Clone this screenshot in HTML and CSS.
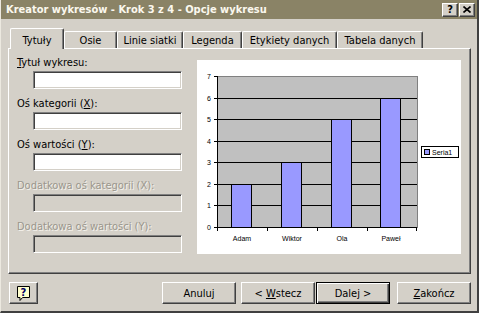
FILE: index.html
```html
<!DOCTYPE html>
<html lang="pl">
  <head>
    <meta charset="UTF-8" />
    <title>Kreator wykresów - Krok 3 z 4 - Opcje wykresu</title>
    <link rel="stylesheet" href="styles.css">
  </head>
  <body>
    <div class="window">
      <div class="titlebar">
        <span class="title">Kreator wykresów - Krok 3 z 4 - Opcje wykresu</span>
        <button class="cap-btn cap-help">?</button>
        <button class="cap-btn cap-close">
          <svg width="8" height="7" viewBox="0 0 8 7">
            <path d="M0.5 0.5 L7.5 6.5 M7.5 0.5 L0.5 6.5" stroke="#000" stroke-width="1.6" />
          </svg>
        </button>
      </div>

      <div class="content">
        <div class="tabs">
          <div class="tab active" style="width: 54px">Tytuły</div>
          <div class="tab" style="width: 53px">Osie</div>
          <div class="tab" style="width: 66px">Linie siatki</div>
          <div class="tab" style="width: 59px">Legenda</div>
          <div class="tab" style="width: 95px">Etykiety danych</div>
          <div class="tab" style="width: 86px">Tabela danych</div>
        </div>

        <div class="panel">
          <div class="fields">
            <div class="field">
              <label><u>T</u>ytuł wykresu:</label>
              <input type="text" class="edit" />
            </div>
            <div class="field">
              <label>Oś kategorii (<u>X</u>):</label>
              <input type="text" class="edit" />
            </div>
            <div class="field">
              <label>Oś wartości (<u>Y</u>):</label>
              <input type="text" class="edit" />
            </div>
            <div class="field disabled">
              <label>Dodatkowa oś kategorii (X):</label>
              <input type="text" class="edit" disabled />
            </div>
            <div class="field disabled">
              <label>Dodatkowa oś wartości (Y):</label>
              <input type="text" class="edit" disabled />
            </div>
          </div>

          <div class="chart">
            <svg width="264" height="194" viewBox="0 0 264 194">
              <!-- plot area -->
              <rect x="20.5" y="16.5" width="200" height="151" fill="#c0c0c0" stroke="#808080" />
              <g stroke="#000" stroke-width="1">
                <line x1="20" y1="145.5" x2="220" y2="145.5" />
                <line x1="20" y1="124.5" x2="220" y2="124.5" />
                <line x1="20" y1="102.5" x2="220" y2="102.5" />
                <line x1="20" y1="81.5" x2="220" y2="81.5" />
                <line x1="20" y1="59.5" x2="220" y2="59.5" />
                <line x1="20" y1="38.5" x2="220" y2="38.5" />
              </g>

              <!-- bars -->
              <g fill="#9999ff" stroke="#000" stroke-width="1">
                <rect x="34.5" y="124.5" width="20" height="43" />
                <rect x="84.5" y="102.5" width="20" height="65" />
                <rect x="134.5" y="59.5" width="20" height="108" />
                <rect x="183.5" y="38.5" width="20" height="129" />
              </g>

              <!-- axes -->
              <g stroke="#000" stroke-width="1">
                <line x1="20.5" y1="16" x2="20.5" y2="168" />
                <line x1="17" y1="167.5" x2="220" y2="167.5" />
                <line x1="17" y1="16.5" x2="20" y2="16.5" />
                <line x1="17" y1="38.5" x2="20" y2="38.5" />
                <line x1="17" y1="59.5" x2="20" y2="59.5" />
                <line x1="17" y1="81.5" x2="20" y2="81.5" />
                <line x1="17" y1="102.5" x2="20" y2="102.5" />
                <line x1="17" y1="124.5" x2="20" y2="124.5" />
                <line x1="17" y1="145.5" x2="20" y2="145.5" />
                <line x1="20.5" y1="167" x2="20.5" y2="171" />
                <line x1="70.5" y1="167" x2="70.5" y2="171" />
                <line x1="120.5" y1="167" x2="120.5" y2="171" />
                <line x1="170.5" y1="167" x2="170.5" y2="171" />
                <line x1="219.5" y1="167" x2="219.5" y2="171" />
              </g>

              <g class="axis-label" text-anchor="end">
                <text x="14" y="170">0</text>
                <text x="14" y="148">1</text>
                <text x="14" y="127">2</text>
                <text x="14" y="105">3</text>
                <text x="14" y="84">4</text>
                <text x="14" y="62">5</text>
                <text x="14" y="41">6</text>
                <text x="14" y="19">7</text>
              </g>
              <g class="axis-label" text-anchor="middle">
                <text x="45" y="181">Adam</text>
                <text x="95" y="181">Wiktor</text>
                <text x="145" y="181">Ola</text>
                <text x="194" y="181">Paweł</text>
              </g>

              <!-- legend -->
              <rect x="224.5" y="86.5" width="37" height="11" fill="#fff" stroke="#000" />
              <rect x="227.5" y="89.5" width="5" height="5" fill="#9999ff" stroke="#000" />
              <text class="axis-label" x="235" y="95">Seria1</text>
            </svg>
          </div>
        </div>

        <div class="buttons">
          <button class="btn help-btn">
            <svg width="16" height="17" viewBox="0 0 16 17">
              <path d="M1.5 1.5 H13.5 V12.5 H6.5 L4 15.5 V12.5 H1.5 Z" fill="#ffffcc" stroke="#000" />
              <text x="7.5" y="11" text-anchor="middle" class="help-q">?</text>
            </svg>
          </button>
          <button class="btn btn-cancel">Anuluj</button>
          <button class="btn btn-back">&lt; <u>W</u>stecz</button>
          <button class="btn btn-next default">Dalej &gt;</button>
          <button class="btn"><u>Z</u>akończ</button>
        </div>
      </div>
    </div>
  </body>
</html>
```

FILE: styles.css
```css
* {
  box-sizing: border-box;
}
body {
  margin: 0;
  font-family: Tahoma, "DejaVu Sans Condensed", "DejaVu Sans", sans-serif;
  font-size: 11px;
  color: #000;
  background: #d4d0c8;
}
.window {
  width: 479px;
  height: 313px;
  background: #d4d0c8;
  border-left: 1px solid #ece9e0;
  border-right: 2px solid #404040;
  border-bottom: 2px solid #404040;
}
.titlebar {
  height: 19px;
  display: flex;
  align-items: center;
  padding: 0 2px 0 5px;
  background: #8a8366;
}
.title {
  flex: 1;
  color: #fbf8ee;
  font-weight: bold;
  white-space: nowrap;
}
.cap-btn {
  width: 16px;
  height: 14px;
  padding: 0;
  margin-left: 1px;
  display: flex;
  align-items: center;
  justify-content: center;
  background: #d4d0c8;
  border: 1px solid;
  border-color: #fff #404040 #404040 #fff;
  box-shadow: inset -1px -1px #808080;
  font-family: inherit;
  font-size: 11px;
  font-weight: bold;
  line-height: 12px;
  color: #000;
}
.content {
  padding: 9px 6px 0 7px;
}
.tabs {
  display: flex;
  align-items: flex-end;
  height: 20px;
  margin-left: 2px;
}
.tab {
  height: 17px;
  padding-top: 2px;
  line-height: 14px;
  text-align: center;
  white-space: nowrap;
  background: #d4d0c8;
  border-top: 1px solid #fff;
  border-left: 1px solid #fff;
  border-right: 1px solid #404040;
  box-shadow: inset -1px 0 #808080;
  border-radius: 2px 2px 0 0;
}
.tab.active {
  height: 21px;
  margin-bottom: -1px;
  padding-top: 5px;
  position: relative;
  z-index: 1;
}
.panel {
  height: 226px;
  display: flex;
  align-items: flex-start;
  padding: 7px 0 0 8px;
  border: 1px solid;
  border-color: #fff #404040 #404040 #fff;
  box-shadow: inset -1px -1px #808080;
}
.fields {
  width: 165px;
  display: flex;
  flex-direction: column;
  gap: 8px;
}
.field label {
  display: block;
  line-height: 14px;
  white-space: nowrap;
}
.edit {
  display: block;
  width: 149px;
  height: 18px;
  margin: 1px 0 0 16px;
  padding: 0;
  background: #fff;
  border: 1px solid;
  border-color: #808080 #fff #fff #808080;
  box-shadow: inset 1px 1px #404040, inset -1px -1px #d4d0c8;
  outline: none;
}
.field.disabled label {
  color: #9a968c;
  text-shadow: 1px 1px #f4f2ec;
}
.edit:disabled {
  background: #d4d0c8;
}
.chart {
  width: 264px;
  height: 194px;
  margin: 4px 0 0 15px;
  background: #fff;
}
.chart svg {
  display: block;
}
.axis-label {
  font-family: "Liberation Sans", Arial, sans-serif;
  font-size: 7px;
  fill: #000;
}
.buttons {
  display: flex;
  height: 22px;
  margin-top: 8px;
}
.btn {
  width: 74px;
  height: 22px;
  padding: 0;
  background: #d4d0c8;
  border: 1px solid;
  border-color: #fff #404040 #404040 #fff;
  box-shadow: inset -1px -1px #808080;
  font-family: inherit;
  font-size: 11px;
  color: #000;
}
.btn.default {
  border-color: #000;
  box-shadow: inset 1px 1px #fff, inset -1px -1px #404040, inset -2px -2px #808080;
}
.help-btn {
  width: 29px;
  margin-left: 1px;
  display: flex;
  align-items: center;
  justify-content: center;
}
.help-q {
  font-family: "DejaVu Sans", sans-serif;
  font-size: 10px;
  font-weight: bold;
  fill: #000066;
}
.btn-cancel {
  margin-left: auto;
  margin-right: 5px;
}
.btn-back {
  margin-right: 1px;
}
.btn-next {
  margin-right: 7px;
}
```
